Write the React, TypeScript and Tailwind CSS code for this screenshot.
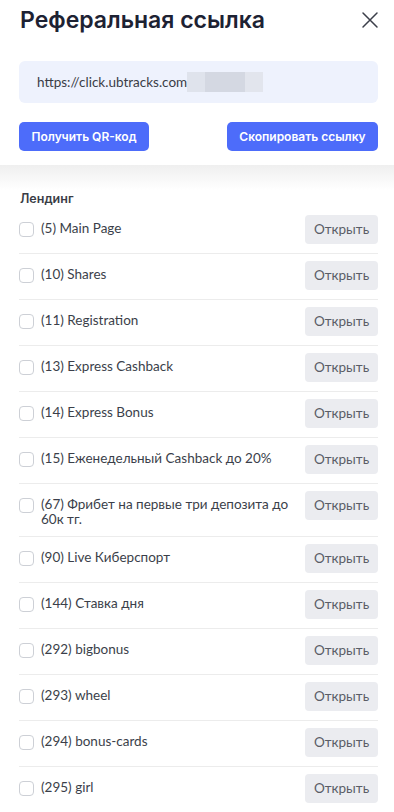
import React from 'react'

const landings = [
  '(5) Main Page',
  '(10) Shares',
  '(11) Registration',
  '(13) Express Cashback',
  '(14) Express Bonus',
  '(15) Еженедельный Cashback до 20%',
  '(67) Фрибет на первые три депозита до 60к тг.',
  '(90) Live Киберспорт',
  '(144) Ставка дня',
  '(292) bigbonus',
  '(293) wheel',
  '(294) bonus-cards',
  '(295) girl',
]

export default function App() {
  return (
    <div className="w-[394px] min-h-[812px] bg-white font-['Inter',sans-serif]">
      {/* Header */}
      <div className="pl-[19px] pr-[16px] pt-[6px] pb-[14px] bg-white">
        <div className="flex items-start justify-between">
          <h1 className="text-[23px] leading-[28px] font-semibold text-[#1d2233] ml-[1px]">
            Реферальная ссылка
          </h1>
          <svg width="18" height="18" viewBox="0 0 18 18" className="mt-[5px] mr-[-1px]">
            <path d="M2 2L16 16M16 2L2 16" stroke="#3c3f4a" strokeWidth="1.5" strokeLinecap="round" />
          </svg>
        </div>

        <div className="mt-[27px] h-[42px] rounded-md bg-[#eef2fd] px-[18px] flex items-center font-['Lato',sans-serif]">
          <span className="text-[13.5px] text-[#3a3d46]">https://click.ubtracks.com</span>
          <span className="flex h-[20px] mt-[-1px]">
            <span className="w-[18px] bg-[#dfe3ec]" />
            <span className="w-[40px] bg-[#d4d8e2]" />
            <span className="w-[18px] bg-[#e2e5ed]" />
          </span>
        </div>

        <div className="mt-[19px] flex justify-between">
          <button className="h-[29px] w-[130px] rounded-[5px] bg-[#4d6cfa] text-white text-[12px] font-semibold">
            Получить QR-код
          </button>
          <button className="h-[29px] w-[151px] rounded-[5px] bg-[#4d6cfa] text-white text-[12px] font-semibold">
            Скопировать ссылку
          </button>
        </div>
      </div>

      {/* Header shadow */}
      <div className="h-[25px] bg-gradient-to-b from-[#efefef] to-white" />

      {/* Landing list */}
      <div className="pl-[19px] pr-[16px]">
        <div className="text-[12.5px] leading-[18px] font-semibold text-[#3a3d46] ml-[1px]">Лендинг</div>
        <div className="font-['Lato',sans-serif]">
          {landings.map((name, i) => (
            <div
              key={i}
              className={
                'flex items-start pt-[7px] pb-[9px] ' +
                (i < landings.length - 1 ? 'border-b border-[#ececec]' : '')
              }
            >
              <div className="flex-1 flex items-start pr-[8px]">
                <span className="mt-[7px] w-[15px] h-[15px] shrink-0 rounded-[4px] border border-[#cdd0d6] bg-white" />
                <span className="mt-[6px] ml-[7px] text-[13.5px] leading-[15px] text-[#3b3f4a]">{name}</span>
              </div>
              <button className="h-[29px] w-[73px] shrink-0 rounded-[4px] bg-[#ebecf0] text-[13.5px] text-[#5a5d66]">
                Открыть
              </button>
            </div>
          ))}
        </div>
      </div>
    </div>
  )
}
